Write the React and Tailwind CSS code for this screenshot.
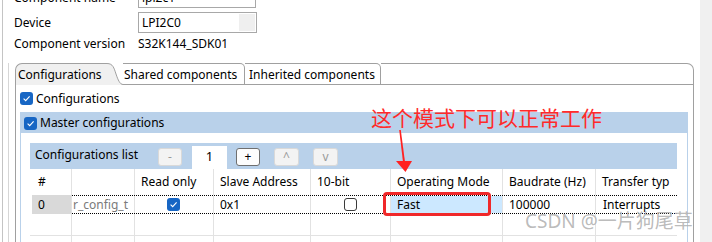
import React from 'react'

const Check = ({ checked }) =>
    checked ? (
        <span className="w-[13px] h-[13px] shrink-0 rounded-[3px] bg-[#1766c4] flex items-center justify-center">
            <svg width="9" height="9" viewBox="0 0 9 9">
                <path d="M1.6 4.6 L3.7 6.7 L7.6 2.3" fill="none" stroke="#fff" strokeWidth="1.1" />
            </svg>
        </span>
    ) : (
        <span className="w-[13px] h-[13px] shrink-0 rounded-[3px] border border-[#3a3a3a] bg-white" />
    )

const cols = [42, 63, 79, 97, 80, 112, 93, 81]

function Cell({ i, className = '', children }) {
    const last = i === cols.length - 1
    return (
        <div
            style={{ width: cols[i] }}
            className={`h-full flex items-center overflow-hidden whitespace-nowrap ${last ? '' : 'border-r border-[#e2e2e2]'} ${className}`}
        >
            {children}
        </div>
    )
}

function SmallButton({ label, enabled, className = '' }) {
    return (
        <div
            className={`h-[18px] flex items-center justify-center rounded-[3px] border text-[12px] leading-none ${enabled ? 'bg-[#fdfdfd] border-[#6f6f6f] text-black' : 'bg-[#f3f3f3] border-[#d9d9d9] text-[#9a9a9a]'} ${className}`}
        >
            {label}
        </div>
    )
}

export default function App() {
    const headers = ['#', '', 'Read only', 'Slave Address', '10-bit', 'Operating Mode', 'Baudrate (Hz)', 'Transfer typ']

    return (
        <div className="relative w-[712px] h-[242px] overflow-hidden bg-white flex text-[12px] text-black font-['Noto_Sans','Noto_Sans_CJK_SC',sans-serif]">
            <div className="w-[700px] h-full flex">
                <div className="w-[2px] shrink-0" />
                <div className="w-[698px] h-full border-l border-[#c4c4c4] flex flex-col">
                    {/* top fields */}
                    <div className="flex flex-col pl-[11px] mt-[-13px]">
                        <div className="flex h-[21px] items-center">
                            <span className="w-[124px]">Component name</span>
                            <div className="w-[118px] h-[21px] border border-[#a8a8a8] pl-[3px] flex items-center">lpi2c1</div>
                        </div>
                        <div className="flex h-[21px] items-center mt-[4px]">
                            <span className="w-[124px]">Device</span>
                            <div className="w-[119px] h-[21px] border border-[#a8a8a8] pl-[3px] pr-[1px] flex items-center justify-between">
                                <span>LPI2C0</span>
                                <span className="w-[16px] h-[17px] bg-[#efefef]" />
                            </div>
                        </div>
                        <div className="flex h-[20px] items-center mt-[1px]">
                            <span className="w-[124px]">Component version</span>
                            <span>S32K144_SDK01</span>
                        </div>
                    </div>

                    {/* tab folder */}
                    <div className="mt-[9px] ml-[5px] border-l border-[#d6d6d6] pl-[6px] flex-1">
                        <div className="w-[679px] flex flex-col">
                            <div className="flex h-[22px] leading-[21px]">
                                <div className="w-[92px] h-full bg-[#f0f0f0] border-t border-l border-[#a0a0a0] rounded-tl-[7px] pl-[2px] whitespace-nowrap">
                                    Configurations
                                </div>
                                <svg width="16" height="22" viewBox="0 0 16 22" className="shrink-0">
                                    <path d="M0 0 C6 0 7 5 9 11 C11 17 13 21 16 21 L16 22 L0 22 Z" fill="#f0f0f0" />
                                    <path d="M0 0.5 C6 0.5 7 5 9 11 C11 17 13 21.5 16 21.5" fill="none" stroke="#a0a0a0" />
                                </svg>
                                <div className="w-[122px] h-full border-t border-r border-b border-[#a0a0a0] rounded-tr-[5px] pl-[1px] whitespace-nowrap">
                                    Shared components
                                </div>
                                <div className="w-[136px] h-full border-t border-r border-b border-[#a0a0a0] rounded-tr-[5px] pl-[4px] whitespace-nowrap">
                                    Inherited components
                                </div>
                                <div className="flex-1 h-full border-t border-r border-b border-[#a0a0a0] rounded-tr-[7px]" />
                            </div>

                            <div className="h-[200px] border-l border-r border-[#a0a0a0] flex flex-col">
                                <div className="mt-[6px] h-[15px] flex items-center gap-[3px] pl-[4px]">
                                    <Check checked />
                                    <span>Configurations</span>
                                </div>

                                <div className="mt-[6px] ml-[4px] mr-[5px] border border-[#b9d1ea] flex flex-col flex-1">
                                    <div className="h-[20px] bg-[#b9d1ea] flex items-center gap-[3px] pl-[3px]">
                                        <Check checked />
                                        <span>Master configurations</span>
                                    </div>

                                    <div className="pt-[10px] pl-[9px] pr-[10px] flex flex-col">
                                        <div className="h-[26px] bg-[#b9d1ea] flex items-center">
                                            <span className="w-[128px] pl-[5px] pb-[3px]">Configurations list</span>
                                            <SmallButton label="-" className="w-[24px] mt-[2px]" />
                                            <div className="w-[35px] h-[23px] ml-[10px] mt-[2px] bg-white flex items-center justify-center text-[13px]">1</div>
                                            <SmallButton label="+" enabled className="w-[24px] ml-[9px] mt-[2px]" />
                                            <SmallButton label="^" className="w-[25px] ml-[14px] mt-[2px] text-[10px]" />
                                            <SmallButton label="v" className="w-[25px] ml-[14px] mt-[2px] text-[11px]" />
                                        </div>

                                        {/* header row */}
                                        <div className="h-[26px] flex bg-white">
                                            {headers.map((h, i) => (
                                                <Cell key={i} i={i} className={i === 0 ? 'pl-[8px]' : 'pl-[6px]'}>
                                                    {h}
                                                </Cell>
                                            ))}
                                        </div>

                                        {/* data row */}
                                        <div className="h-[19px] flex">
                                            <div className="w-[42px] h-full border-r border-[#e2e2e2] pl-[2px]">
                                                <div className="h-full bg-[#d9d9d9] pl-[6px] flex items-center">0</div>
                                            </div>
                                            <div className="flex-1 h-full flex border-y border-dotted border-black">
                                                <Cell i={1} className="pl-[1px] text-[#7a7a7a]">r_config_t</Cell>
                                                <Cell i={2} className="justify-center pr-[1px]">
                                                    <Check checked />
                                                </Cell>
                                                <Cell i={3} className="pl-[6px]">0x1</Cell>
                                                <Cell i={4} className="justify-center">
                                                    <Check />
                                                </Cell>
                                                <Cell i={5} className="pl-[6px] bg-[#cce8ff]">Fast</Cell>
                                                <Cell i={6} className="pl-[6px]">100000</Cell>
                                                <Cell i={7} className="pl-[7px]">Interrupts</Cell>
                                            </div>
                                        </div>

                                        {/* empty row */}
                                        <div className="h-[22px] flex border-b border-[#e2e2e2]">
                                            {cols.map((_, i) => (
                                                <Cell key={i} i={i} />
                                            ))}
                                        </div>
                                        <div className="h-[12px] flex">
                                            {cols.map((_, i) => (
                                                <Cell key={i} i={i} />
                                            ))}
                                        </div>
                                    </div>
                                </div>
                            </div>
                        </div>
                    </div>
                </div>
            </div>
            <div className="w-[12px] h-full bg-[#f0f0f0]" />

            {/* annotations */}
            <div className="absolute left-[371px] top-[106px] text-[21px] leading-[22px] text-[#ff2a2a] font-['Noto_Sans_CJK_SC',sans-serif] whitespace-nowrap">
                这个模式下可以正常工作
            </div>
            <svg className="absolute left-[390px] top-[128px]" width="26" height="46" viewBox="0 0 26 46">
                <path d="M9.2 2 L10.8 2 L15 34 L13 34 Z" fill="#ff2222" />
                <path d="M6 33 L22 33 L15.5 44 Z" fill="#ff2222" />
            </svg>
            <div className="absolute left-[383px] top-[192px] w-[108px] h-[24px] border-[3px] border-[#f0282a] rounded-[4px]" />
            <div className="absolute left-[525px] top-[208px] text-[19px] leading-[26px] text-[#b3b3b3]/90 font-['Noto_Sans','Noto_Sans_CJK_SC',sans-serif] whitespace-nowrap">
                CSDN @一片狗尾草
            </div>
        </div>
    )
}
